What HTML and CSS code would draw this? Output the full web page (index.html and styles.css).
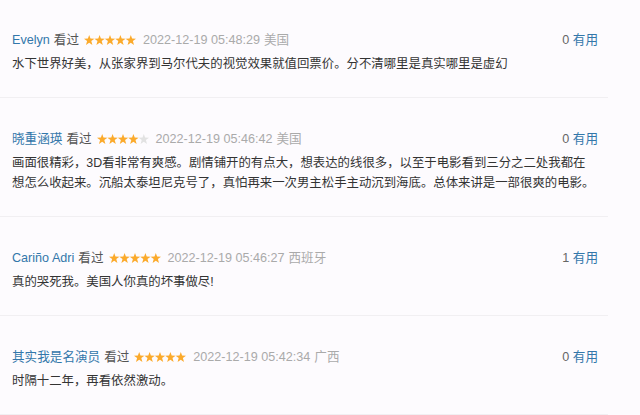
FILE: index.html
```html
<!DOCTYPE html>
<html lang="zh-CN">
<head>
    <meta charset="UTF-8">
    <title>短评</title>
    <link rel="stylesheet" href="styles.css">
</head>
<body>
    <svg width="0" height="0" class="defs">
        <defs>
            <polygon id="star" points="5.2,0 6.5,3.6 10.4,3.7 7.3,6.1 8.4,10 5.2,7.7 2,10 3.1,6.1 0,3.7 3.9,3.6"/>
        </defs>
    </svg>

    <div class="comment-list">
        <div class="comment-item">
            <div class="comment-info">
                <span class="meta">
                    <a class="user">Evelyn</a>
                    <span class="watched">看过</span>
                    <svg class="stars" width="52" height="10" viewBox="0 0 52 10">
                        <use href="#star" x="0" class="on"/><use href="#star" x="10.4" class="on"/><use href="#star" x="20.8" class="on"/><use href="#star" x="31.2" class="on"/><use href="#star" x="41.6" class="on"/>
                    </svg>
                    <span class="time">2022-12-19 05:48:29</span>
                    <span class="location">美国</span>
                </span>
                <span class="votes"><span class="count">0</span> <a class="useful">有用</a></span>
            </div>
            <p class="comment-text">水下世界好美，从张家界到马尔代夫的视觉效果就值回票价。分不清哪里是真实哪里是虚幻</p>
        </div>

        <div class="comment-item">
            <div class="comment-info">
                <span class="meta">
                    <a class="user">晓重涵瑛</a>
                    <span class="watched">看过</span>
                    <svg class="stars" width="52" height="10" viewBox="0 0 52 10">
                        <use href="#star" x="0" class="on"/><use href="#star" x="10.4" class="on"/><use href="#star" x="20.8" class="on"/><use href="#star" x="31.2" class="on"/><use href="#star" x="41.6" class="off"/>
                    </svg>
                    <span class="time">2022-12-19 05:46:42</span>
                    <span class="location">美国</span>
                </span>
                <span class="votes"><span class="count">0</span> <a class="useful">有用</a></span>
            </div>
            <p class="comment-text">画面很精彩，3D看非常有爽感。剧情铺开的有点大，想表达的线很多，以至于电影看到三分之二处我都在想怎么收起来。沉船太泰坦尼克号了，真怕再来一次男主松手主动沉到海底。总体来讲是一部很爽的电影。</p>
        </div>

        <div class="comment-item">
            <div class="comment-info">
                <span class="meta">
                    <a class="user">Cariño Adri</a>
                    <span class="watched">看过</span>
                    <svg class="stars" width="52" height="10" viewBox="0 0 52 10">
                        <use href="#star" x="0" class="on"/><use href="#star" x="10.4" class="on"/><use href="#star" x="20.8" class="on"/><use href="#star" x="31.2" class="on"/><use href="#star" x="41.6" class="on"/>
                    </svg>
                    <span class="time">2022-12-19 05:46:27</span>
                    <span class="location">西班牙</span>
                </span>
                <span class="votes"><span class="count">1</span> <a class="useful">有用</a></span>
            </div>
            <p class="comment-text">真的哭死我。美国人你真的坏事做尽!</p>
        </div>

        <div class="comment-item">
            <div class="comment-info">
                <span class="meta">
                    <a class="user">其实我是名演员</a>
                    <span class="watched">看过</span>
                    <svg class="stars" width="52" height="10" viewBox="0 0 52 10">
                        <use href="#star" x="0" class="on"/><use href="#star" x="10.4" class="on"/><use href="#star" x="20.8" class="on"/><use href="#star" x="31.2" class="on"/><use href="#star" x="41.6" class="on"/>
                    </svg>
                    <span class="time">2022-12-19 05:42:34</span>
                    <span class="location">广西</span>
                </span>
                <span class="votes"><span class="count">0</span> <a class="useful">有用</a></span>
            </div>
            <p class="comment-text">时隔十二年，再看依然激动。</p>
        </div>
    </div>
</body>
</html>
```

FILE: styles.css
```css
body { margin: 0; background: #fdfbfe; font-family: "Liberation Sans", "Noto Sans CJK SC", sans-serif; font-size: 12.4px; color: #494949; }
.defs { position: absolute; }
.comment-list { width: 608px; }
.comment-item { padding: 31px 10px 23px 12px; border-bottom: 1px solid #f1eff2; }
.comment-item:first-child { padding-top: 30px; }
.comment-info { display: flex; justify-content: space-between; align-items: center; height: 20px; line-height: 20px; font-size: 12.6px; }
.meta { display: flex; align-items: center; gap: 4px; }
.user { color: #3377aa; text-decoration: none; }
.watched { color: #555; }
.stars { display: block; margin: 0 3px 0 1px; }
.stars .on { fill: #fbaa2c; }
.stars .off { fill: #e2e2e2; }
.time { color: #aaa; }
.location { color: #aaa; }
.count { color: #666; }
.useful { color: #3377aa; text-decoration: none; }
.comment-text { width: 585px; margin: 4px 0 0; line-height: 20px; color: #333; }
```
